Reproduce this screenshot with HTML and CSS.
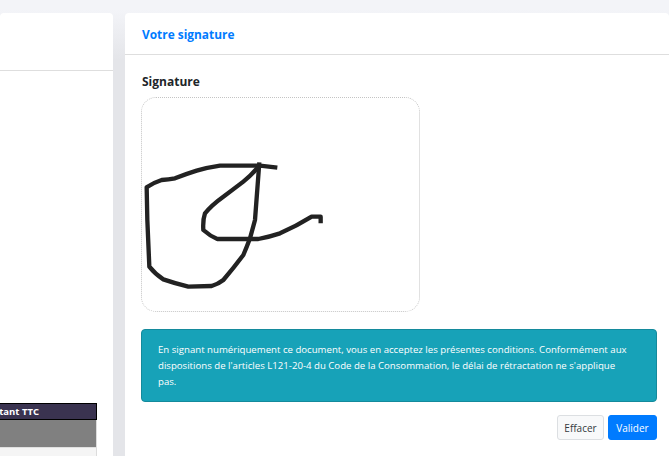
FILE: index.html
```html
<!DOCTYPE html>
<html lang="fr">
<head>
<meta charset="utf-8">
<title>Votre signature</title>
<link rel="stylesheet" href="styles.css">
</head>
<body>
<div class="page">
  <section class="card side">
    <div class="side-head"></div>
    <div class="side-body">
      <div class="table-head"><span>Montant TTC</span></div>
      <div class="table-grey"></div>
      <div class="table-row"></div>
    </div>
  </section>
  <section class="card main">
    <header class="main-head"><h2>Votre signature</h2></header>
    <div class="main-body">
      <h3>Signature</h3>
      <div class="pad">
        <svg class="ink" viewBox="36 -126 831 639" aria-hidden="true">
          <path d="M442 83 L390 77 L270 77 Q235 82 200 92 Q165 103 135 115 Q115 119 95 120 Q70 128 50 142 L52 240 L58 380 Q75 402 100 418 Q135 430 175 440 L245 438 Q265 432 280 420 Q310 385 340 345 Q350 322 360 295 L375 240 L388 67"/>
          <path d="M388 77 Q365 105 340 125 Q310 148 280 170 Q245 195 225 220 Q218 240 220 270 Q240 288 262 297 L385 297 Q420 290 450 280 Q500 258 545 230 L572 230 L572 250"/>
        </svg>
      </div>
      <p class="notice">En signant numériquement ce document, vous en acceptez les présentes conditions. Conformément aux dispositions de l'articles L121-20-4 du Code de la Consommation, le délai de rétractation ne s'applique pas.</p>
      <div class="actions">
        <button class="btn btn-light" type="button">Effacer</button>
        <button class="btn btn-primary" type="button">Valider</button>
      </div>
    </div>
  </section>
</div>
</body>
</html>
```
FILE: styles.css
```css
html, body {
  margin: 0;
  height: 456px;
  overflow: hidden;
  background: #f3f4f8;
}
body {
  font-family: "Open Sans", "Noto Sans", sans-serif;
  color: #212529;
}
.page {
  display: flex;
  gap: 12px;
  height: 456px;
  padding-top: 13px;
  box-sizing: border-box;
  width: 669px;
  overflow: hidden;
  background: linear-gradient(#f3f4f8 0, #f3f4f8 10px, #e4e5e9 60px);
}
.card {
  background: #fff;
  border-radius: 4px 4px 0 0;
  flex: none;
  height: 443px;
}
.side {
  width: 113px;
  display: flex;
  flex-direction: column;
}
.side-head {
  height: 57px;
  border-bottom: 1px solid #dedede;
  flex: none;
}
.side-body {
  padding-top: 332px;
  width: 97px;
}
.table-head {
  height: 15px;
  background: #3a3350;
  border: 1px solid #000;
  border-left: 0;
  color: #fff;
  font-size: 9.5px;
  font-weight: 700;
  line-height: 15px;
  display: flex;
  justify-content: flex-end;
  padding-right: 57px;
  white-space: nowrap;
  overflow: hidden;
}
.table-head span {
  flex: none;
}
.table-grey {
  height: 27px;
  background: #808080;
  border-right: 1px solid #dcdcdc;
}
.table-row {
  height: 12px;
  background: #f5f5f5;
  border-top: 1px solid #e0e0e0;
  border-right: 1px solid #dcdcdc;
}
.main {
  width: 544px;
}
.main-head {
  height: 41px;
  border-bottom: 1px solid #dedede;
  padding-left: 17px;
  display: flex;
  align-items: center;
}
.main-head h2 {
  margin: 1px 0 0;
  font-size: 11.9px;
  font-weight: 700;
  color: #007bff;
}
.main-body {
  width: 516px;
  padding: 18px 0 0 16px;
}
.main-body h3 {
  margin: 0;
  padding-left: 1px;
  font-size: 12px;
  line-height: 17px;
  font-weight: 700;
  color: #212529;
}
.pad {
  margin-top: 7px;
  width: 279px;
  height: 215px;
  box-sizing: border-box;
  border: 1px dotted #c4c4c4;
  border-radius: 15px;
}
.ink {
  display: block;
  width: 277px;
  height: 213px;
}
.ink path {
  fill: none;
  stroke: #222;
  stroke-width: 13;
  stroke-linejoin: round;
}
.notice {
  margin: 17px 0 0;
  height: 73px;
  box-sizing: border-box;
  padding: 12px 24px 0 16px;
  background: #17a2b8;
  border: 1px solid #148a9c;
  border-radius: 4px;
  color: #fff;
  font-size: 9.65px;
  line-height: 15.8px;
}
.actions {
  display: flex;
  justify-content: flex-end;
  gap: 4px;
  margin-top: 13px;
}
.btn {
  height: 25px;
  padding: 0;
  border-radius: 3px;
  font: 400 10px "Open Sans", "Noto Sans", sans-serif;
}
.btn-light {
  width: 47px;
  background: #f8f9fa;
  border: 1px solid #dcdfe2;
  color: #343a40;
}
.btn-primary {
  width: 49px;
  background: #007bff;
  border: 1px solid #007bff;
  color: #fff;
}
```
